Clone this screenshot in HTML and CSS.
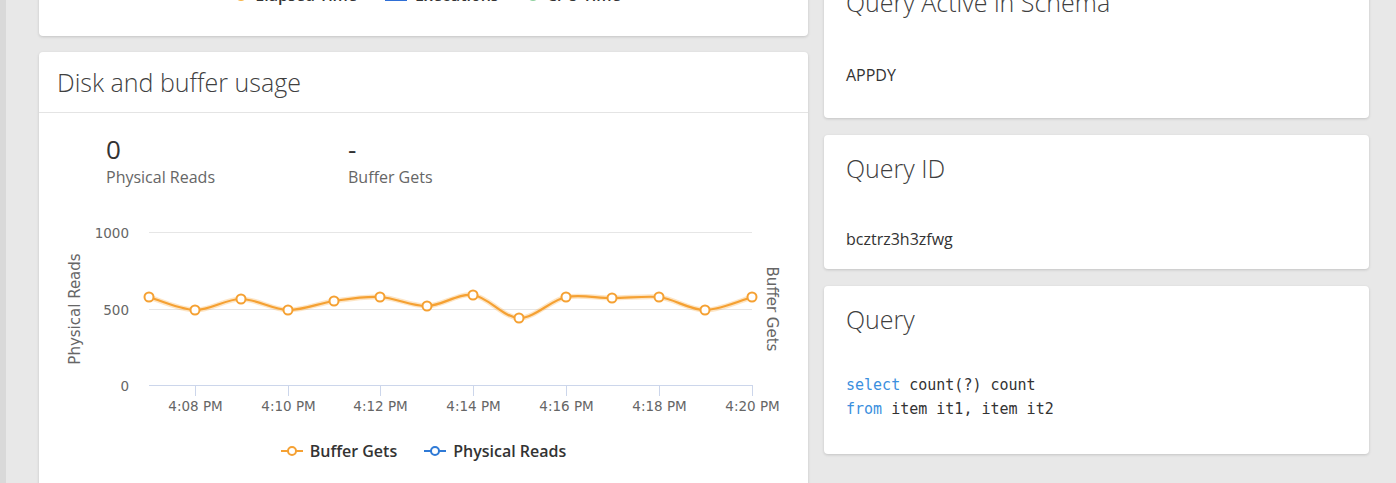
FILE: index.html
```html
<!DOCTYPE html>
<html lang="en">
<head>
<meta charset="utf-8">
<title>Query details</title>
<link rel="stylesheet" href="styles.css">
</head>
<body>
<div class="page">
  <div class="col col-left">
    <section class="card card-top">
      <div class="top-legend">
        <span class="tl-item"><span class="sym-dot sym-orange"></span>Elapsed Time</span>
        <span class="tl-item"><span class="sym-rect"></span>Executions</span>
        <span class="tl-item"><span class="sym-dot sym-green"></span>CPU Time</span>
      </div>
    </section>

    <section class="card card-disk">
      <header class="card-head"><h2 class="card-title">Disk and buffer usage</h2></header>
      <div class="stats">
        <div class="stat">
          <div class="stat-val">0</div>
          <div class="stat-lbl">Physical Reads</div>
        </div>
        <div class="stat">
          <div class="stat-val">-</div>
          <div class="stat-lbl">Buffer Gets</div>
        </div>
      </div>
      <svg class="chart" width="769" height="240" viewBox="39 190 769 240" xmlns="http://www.w3.org/2000/svg">
        <g stroke="#e6e6e6" stroke-width="1">
          <line x1="149" y1="232.5" x2="752" y2="232.5"/>
          <line x1="149" y1="309.5" x2="752" y2="309.5"/>
        </g>
        <g stroke="#ccd6eb" stroke-width="1">
          <line x1="149" y1="385.5" x2="752.5" y2="385.5"/>
          <line x1="195.5" y1="385" x2="195.5" y2="396"/>
          <line x1="288.5" y1="385" x2="288.5" y2="396"/>
          <line x1="380.5" y1="385" x2="380.5" y2="396"/>
          <line x1="473.5" y1="385" x2="473.5" y2="396"/>
          <line x1="566.5" y1="385" x2="566.5" y2="396"/>
          <line x1="659.5" y1="385" x2="659.5" y2="396"/>
          <line x1="752.5" y1="385" x2="752.5" y2="396"/>
        </g>
        <g class="ax-lbl" text-anchor="end">
          <text x="129" y="237.5">1000</text>
          <text x="129" y="314.5">500</text>
          <text x="129" y="390.5">0</text>
        </g>
        <g class="ax-lbl" text-anchor="middle">
          <text x="195.5" y="410.5">4:08 PM</text>
          <text x="288.5" y="410.5">4:10 PM</text>
          <text x="380.5" y="410.5">4:12 PM</text>
          <text x="473.5" y="410.5">4:14 PM</text>
          <text x="566.5" y="410.5">4:16 PM</text>
          <text x="659.5" y="410.5">4:18 PM</text>
          <text x="752.5" y="410.5">4:20 PM</text>
        </g>
        <text class="ax-title" x="80" y="309" text-anchor="middle" transform="rotate(-90 80 309)">Physical Reads</text>
        <text class="ax-title" x="767" y="309" text-anchor="middle" transform="rotate(90 767 309)">Buffer Gets</text>
        <path d="M149 297 C156.7 299.2 179.7 309.7 195 310 C210.3 310.3 225.5 299 241 299 C256.5 299 272.5 309.7 288 310 C303.5 310.3 318.7 303.2 334 301 C349.3 298.8 364.5 296.2 380 297 C395.5 297.8 411.5 306.3 427 306 C442.5 305.7 457.7 293 473 295 C488.3 297 503.5 317.7 519 318 C534.5 318.3 550.5 300.3 566 297 C581.5 294.5 596.5 298 612 298 C627.5 298 643.5 296 659 297 C674.5 299 689.5 310 705 310 C720.5 310 744.2 299.2 752 297" fill="none" stroke="#f7a83e" stroke-opacity="0.3" stroke-width="5"/>
        <path d="M149 297 C156.7 299.2 179.7 309.7 195 310 C210.3 310.3 225.5 299 241 299 C256.5 299 272.5 309.7 288 310 C303.5 310.3 318.7 303.2 334 301 C349.3 298.8 364.5 296.2 380 297 C395.5 297.8 411.5 306.3 427 306 C442.5 305.7 457.7 293 473 295 C488.3 297 503.5 317.7 519 318 C534.5 318.3 550.5 300.3 566 297 C581.5 294.5 596.5 298 612 298 C627.5 298 643.5 296 659 297 C674.5 299 689.5 310 705 310 C720.5 310 744.2 299.2 752 297" fill="none" stroke="#f5a133" stroke-width="2.2"/>
        <g fill="#fff" stroke="#f5a133" stroke-width="2">
          <circle cx="149" cy="297" r="4.5"/>
          <circle cx="195" cy="310" r="4.5"/>
          <circle cx="241" cy="299" r="4.5"/>
          <circle cx="288" cy="310" r="4.5"/>
          <circle cx="334" cy="301" r="4.5"/>
          <circle cx="380" cy="297" r="4.5"/>
          <circle cx="427" cy="306" r="4.5"/>
          <circle cx="473" cy="295" r="4.5"/>
          <circle cx="519" cy="318" r="4.5"/>
          <circle cx="566" cy="297" r="4.5"/>
          <circle cx="612" cy="298" r="4.5"/>
          <circle cx="659" cy="297" r="4.5"/>
          <circle cx="705" cy="310" r="4.5"/>
          <circle cx="752" cy="297" r="4.5"/>
        </g>
      </svg>
      <div class="legend">
        <span class="lg-item">
          <svg class="lg-sym" width="22" height="12" viewBox="0 0 22 12"><line x1="0" y1="6" x2="22" y2="6" stroke="#f5a133" stroke-width="2"/><circle cx="11" cy="6" r="4" fill="#fff" stroke="#f5a133" stroke-width="2"/></svg>
          Buffer Gets
        </span>
        <span class="lg-item">
          <svg class="lg-sym" width="22" height="12" viewBox="0 0 22 12"><line x1="0" y1="6" x2="22" y2="6" stroke="#2f7ad6" stroke-width="2"/><circle cx="11" cy="6" r="4" fill="#fff" stroke="#2f7ad6" stroke-width="2"/></svg>
          Physical Reads
        </span>
      </div>
    </section>
  </div>

  <div class="col col-right">
    <section class="card info-card info-tall">
      <h2 class="card-title">Query Active in Schema</h2>
      <div class="info-val">APPDY</div>
    </section>
    <section class="card info-card">
      <h2 class="card-title">Query ID</h2>
      <div class="info-val">bcztrz3h3zfwg</div>
    </section>
    <section class="card info-card info-code">
      <h2 class="card-title">Query</h2>
      <pre class="code"><span class="kw">select</span> count(?) count
<span class="kw">from</span> item it1, item it2</pre>
    </section>
  </div>
</div>
</body>
</html>
```

FILE: styles.css
```css
html, body {
  margin: 0;
  height: 100%;
  overflow: hidden;
}

body {
  background: #e8e8e8;
  border-left: 6px solid #d9d9d9;
  box-sizing: border-box;
  font-family: "Open Sans", "Liberation Sans", sans-serif;
  color: #333;
}

.page {
  display: flex;
  align-items: flex-start;
  gap: 16px;
  padding-left: 33px;
  margin-top: -30px;
}

.col {
  display: flex;
  flex-direction: column;
}

.col-left {
  width: 769px;
  gap: 16px;
}

.col-right {
  width: 545px;
  gap: 17px;
}

.card {
  background: #fff;
  border-radius: 4px;
  box-shadow: 0 1px 3px rgba(0, 0, 0, 0.16);
}

/* top (scrolled) card */
.card-top {
  padding: 15px 0 31px 9px;
}

.top-legend {
  display: flex;
  justify-content: center;
  gap: 28px;
  font-size: 16px;
  font-weight: 600;
  line-height: 20px;
  color: #333;
}

.tl-item {
  display: flex;
  align-items: center;
  gap: 8px;
}

.sym-dot {
  width: 12px;
  height: 12px;
  border-radius: 50%;
}

.sym-orange { background: #f7b548; }
.sym-green { background: #8fd19e; }

.sym-rect {
  width: 22px;
  height: 12px;
  background: #2f6fd6;
}

/* titles */
.card-title {
  margin: 0;
  font-size: 25px;
  line-height: 32px;
  font-weight: 300;
  color: #3f3f3f;
}

.card-head {
  padding: 14px 18px 14px;
  border-bottom: 1px solid #e4e4e4;
}

/* stats */
.stats {
  display: flex;
  padding: 21px 0 0 67px;
}

.stat {
  width: 242px;
}

.stat-val {
  font-size: 26px;
  line-height: 30px;
  color: #333;
}

.stat-lbl {
  margin-top: 3px;
  font-size: 16px;
  line-height: 20px;
  color: #666;
}

/* chart */
.chart {
  display: block;
  margin-top: 3px;
}

.ax-lbl {
  font-family: "DejaVu Sans", sans-serif;
  font-size: 13.5px;
  fill: #666;
}

.ax-title {
  font-family: "DejaVu Sans", sans-serif;
  font-size: 15px;
  fill: #666;
}

.legend {
  display: flex;
  justify-content: center;
  gap: 27px;
  margin-top: 11px;
  padding-bottom: 40px;
  font-size: 16px;
  font-weight: 600;
  line-height: 20px;
  color: #333;
}

.lg-item {
  display: flex;
  align-items: center;
  gap: 7px;
}

.lg-sym {
  display: block;
}

/* right info cards */
.info-card {
  padding: 17px 22px 19px;
}

.info-tall {
  padding-top: 16px;
  padding-bottom: 32px;
}

.info-val {
  margin-top: 44px;
  font-size: 16px;
  line-height: 22px;
  color: #333;
}

.info-tall .info-val {
  margin-top: 46px;
}

.info-code {
  padding-bottom: 33px;
}

.code {
  margin: 39px 0 0;
  font-family: "DejaVu Sans Mono", "Liberation Mono", monospace;
  font-size: 15px;
  line-height: 23.5px;
  color: #333;
}

.kw {
  color: #3b8fde;
}
```
